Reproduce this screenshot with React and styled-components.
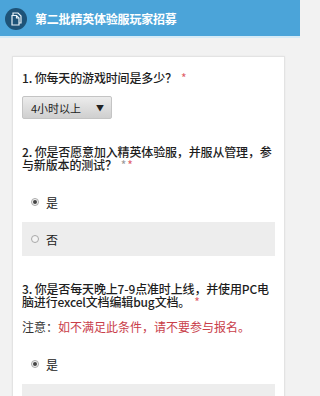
import React from "react";
import styled, { createGlobalStyle } from "styled-components";

const Global = createGlobalStyle`
  html, body { margin: 0; padding: 0; background: #f2f2f2; }
  body { font-family: "Noto Sans CJK SC", "Noto Sans", sans-serif; }
  * { box-sizing: border-box; }
`;

const Page = styled.div`
  width: 300px;
  height: 396px;
  overflow: hidden;
  background: #f2f2f2;
`;

const Header = styled.header`
  height: 38px;
  background: #4ba4d9;
  border-bottom: 2px solid #d6ebf7;
  display: flex;
  align-items: center;
  padding-left: 5px;
  gap: 8px;
`;

const Logo = styled.div`
  width: 22px;
  height: 22px;
  border-radius: 50%;
  background: #1e5378;
  display: flex;
  align-items: center;
  justify-content: center;
  margin-top: 1px;
`;

const Title = styled.h1`
  margin: 0;
  font-size: 12px;
  font-weight: 700;
  color: #ffffff;
  letter-spacing: -0.2px;
`;

const Card = styled.main`
  margin: 18px 15px 0 12px;
  background: #ffffff;
  border: 1px solid #e3e3e3;
  border-bottom: none;
  padding: 14px 9px 40px 9px;
  box-shadow: 0 0 2px rgba(0,0,0,0.05);
`;

const Question = styled.section`
  margin-bottom: 26px;
`;

const QText = styled.div`
  font-size: 12px;
  line-height: 13px;
  font-weight: 500;
  color: #1e1e1e;
  letter-spacing: -0.15px;
`;

const Star = styled.span`
  color: ${(p) => (p.$muted ? "#999" : "#e0606a")};
  margin-left: ${(p) => (p.$tight ? "1px" : "4px")};
  font-weight: 400;
`;

const Note = styled.div`
  margin-top: 12px;
  font-size: 12px;
  line-height: 13px;
  color: #333;
`;

const Red = styled.span`
  color: #c9404a;
`;

const Select = styled.div`
  margin-top: 12px;
  width: 90px;
  height: 23px;
  border: 1px solid #c4c4c4;
  border-radius: 2px;
  background: linear-gradient(#ececec, #cfcfcf);
  display: flex;
  align-items: center;
  justify-content: space-between;
  padding: 0 7px 0 8px;
  font-size: 11px;
  color: #222;
`;

const Arrow = styled.span`
  font-size: 8px;
  color: #222;
`;

const Options = styled.div`
  margin-top: 14px;
  display: flex;
  flex-direction: column;
  gap: 3px;
`;

const Option = styled.label`
  height: 34px;
  display: flex;
  align-items: center;
  gap: 7px;
  padding-left: 9px;
  background: ${(p) => (p.$shade ? "#ededed" : "transparent")};
  font-size: 12px;
  color: #222;
`;

const Radio = styled.span`
  width: 8px;
  height: 8px;
  border-radius: 50%;
  border: 1px solid #a8a8a8;
  background: #f4f4f4;
  display: flex;
  align-items: center;
  justify-content: center;
  &::after {
    content: "";
    width: 4px;
    height: 4px;
    border-radius: 50%;
    background: ${(p) => (p.$on ? "#444" : "transparent")};
  }
`;

const DocIcon = () => (
  <svg width="13" height="14" viewBox="0 0 13 14" fill="none" stroke="#e8f2f8" strokeWidth="1.2">
    <path d="M3 3 V1 H8 L11 4 V11 H9" />
    <path d="M2 3.5 H6.5 L9 6 V13 H2 Z" />
    <path d="M6.5 3.5 V6 H9" />
  </svg>
);

const Choice = ({ label, on, shade }) => (
  <Option $shade={shade}>
    <Radio $on={on} />
    {label}
  </Option>
);

export default function App() {
  return (
    <>
      <Global />
      <Page>
        <Header>
          <Logo>
            <DocIcon />
          </Logo>
          <Title>第二批精英体验服玩家招募</Title>
        </Header>
        <Card>
          <Question>
            <QText>
              1. 你每天的游戏时间是多少？<Star>*</Star>
            </QText>
            <Select>
              4小时以上<Arrow>▼</Arrow>
            </Select>
          </Question>
          <Question>
            <QText>
              2. 你是否愿意加入精英体验服，并服从管理，参与新版本的测试？
              <Star $muted>*</Star>
              <Star $tight>*</Star>
            </QText>
            <Options>
              <Choice label="是" on />
              <Choice label="否" shade />
            </Options>
          </Question>
          <Question>
            <QText>
              3. 你是否每天晚上7-9点准时上线，并使用PC电脑进行excel文档编辑bug文档。<Star>*</Star>
            </QText>
            <Note>
              注意：<Red>如不满足此条件，请不要参与报名。</Red>
            </Note>
            <Options>
              <Choice label="是" on />
              <Choice label="否" shade />
            </Options>
          </Question>
        </Card>
      </Page>
    </>
  );
}
